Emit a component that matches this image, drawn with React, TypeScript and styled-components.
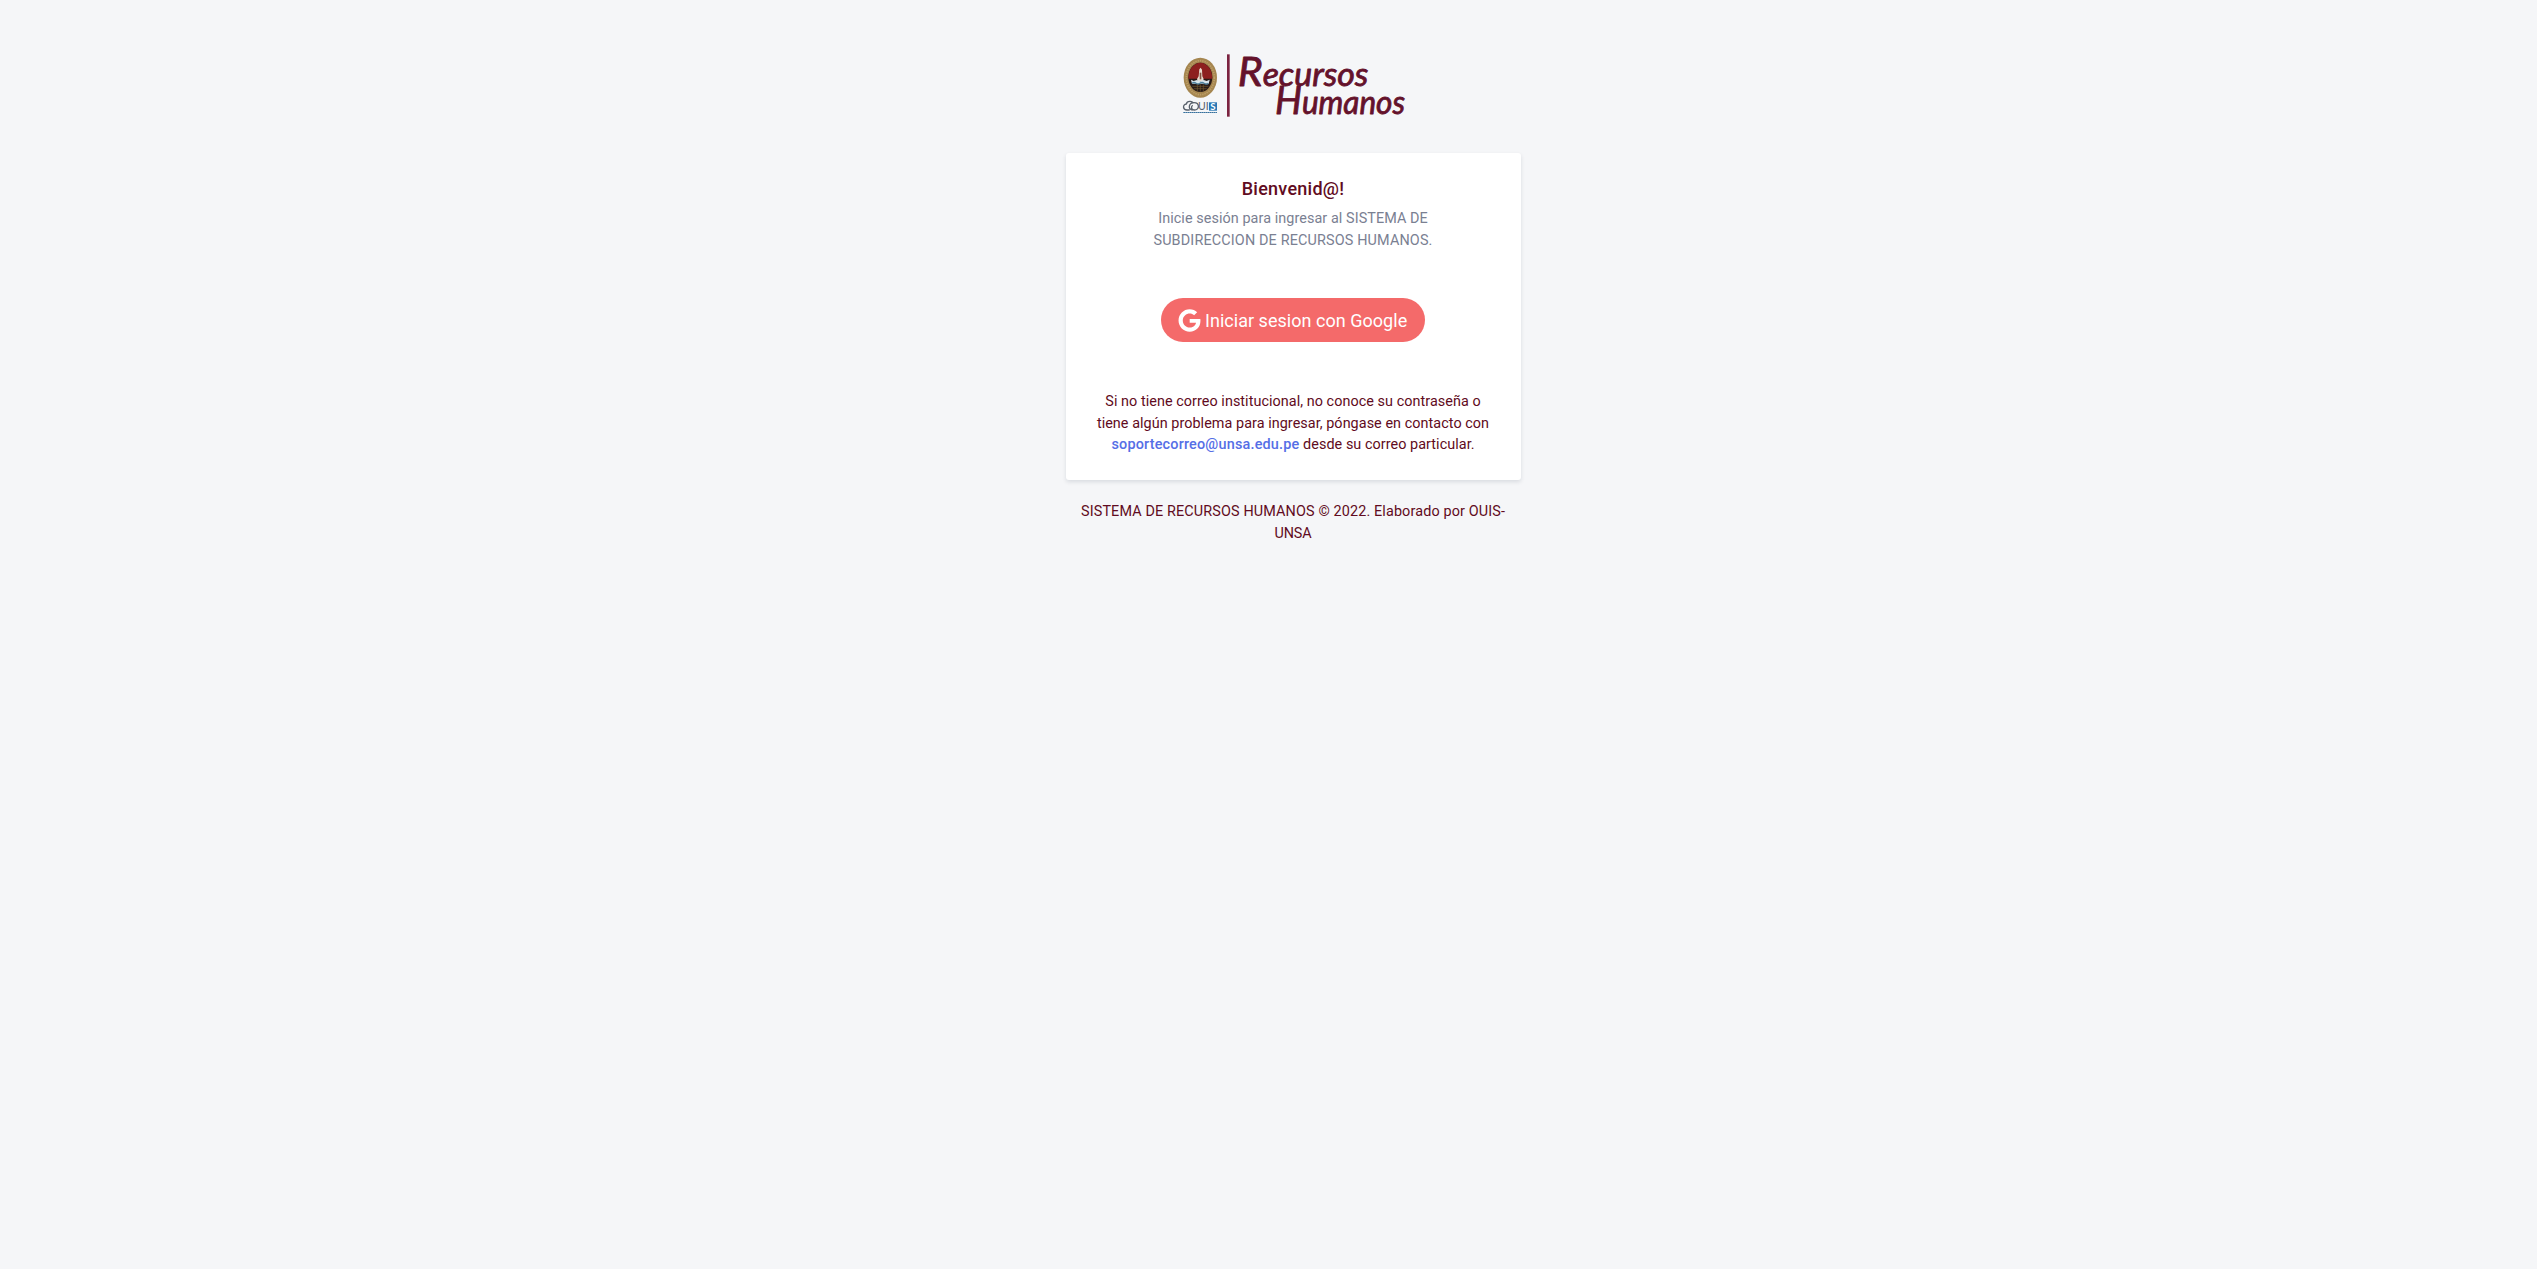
import React from "react";
import styled, { createGlobalStyle } from "styled-components";
import { FaGoogle } from "react-icons/fa";

const GlobalStyle = createGlobalStyle`
  *, *::before, *::after { box-sizing: border-box; }
  body {
    margin: 0;
    background: #f5f6f8;
    color: #610b21;
    font-family: Roboto, "Liberation Sans", sans-serif;
    font-size: 14.4px;
    line-height: 21.6px;
  }
`;

const Page = styled.main`
  display: flex;
  flex-direction: column;
  align-items: center;
  min-height: 100vh;
  padding: 50px 0 0 49px;
`;

const LogoLink = styled.div`
  display: flex;
  justify-content: center;
  height: 70px;
  margin-bottom: 33px;
`;

const LogoSvg = styled.svg`
  display: block;
  width: 223px;
  height: 70px;
  overflow: visible;
`;

const LogoWord = styled.text`
  font-family: Lato, "Open Sans", sans-serif;
  font-style: italic;
  font-weight: 400;
  font-size: 98px;
  fill: #64122b;
  stroke: #64122b;
  stroke-width: 2.5px;
  stroke-linejoin: round;
`;

const Card = styled.section`
  display: flex;
  flex-direction: column;
  align-items: center;
  width: 455px;
  height: 327px;
  padding: 22px 24px 24px;
  background: #fff;
  border-radius: 3px;
  box-shadow: 0 2px 4px rgba(15, 34, 58, 0.12);
  text-align: center;
`;

const Title = styled.h1`
  margin: 0 0 6px;
  font-size: 18px;
  line-height: 27px;
  font-weight: 500;
  letter-spacing: 0.26px;
`;

const Line = styled.span<{ $tracking: number }>`
  display: block;
  white-space: nowrap;
  letter-spacing: ${(p) => p.$tracking}px;
`;

const Intro = styled.p`
  margin: 0 0 47.3px;
  color: #7a8092;
`;

const GoogleButton = styled.button`
  display: flex;
  align-items: center;
  gap: 4px;
  width: 264px;
  height: 45px;
  padding: 0 17px;
  border: 0;
  border-radius: 23px;
  background: #f46a6a;
  color: #fff;
  font: 400 18px/27px Roboto, "Liberation Sans", sans-serif;
  letter-spacing: 0.03px;
  white-space: nowrap;
  cursor: pointer;

  svg {
    flex: none;
    width: 23px;
    height: 23px;
  }
`;

const Help = styled.p`
  margin: 49.500px 0 0;
`;

const MailLink = styled.a`
  color: #556ee6;
  font-weight: 500;
  letter-spacing: 0.2px;
  text-decoration: none;
`;

const Footer = styled.footer`
  margin-top: 21px;
  text-align: center;
`;

function Logo() {
  return (
    <LogoSvg viewBox="36 30 669 210" role="img" aria-label="Recursos Humanos">
      <ellipse cx="91" cy="113" rx="50" ry="60" fill="#a58650" />
      <ellipse cx="91" cy="113" rx="42" ry="51" fill="none" stroke="#bd9f68" strokeWidth="5" strokeDasharray="4 3" />
      <ellipse cx="91" cy="112" rx="36" ry="44" fill="#281a17" />
      <path d="M55 116a36 48 0 0 1 72 0z" fill="#8d201f" />
      <path d="M88 88l4-5 4 6 1 20 4 8-2 6H83l-2-6 5-8z" fill="#e9ddd0" />
      <path d="M89 98h5v20h-5z" fill="#81503e" />
      <path d="M63 119l8 4 10-3 10 4 10-4 9 3 9-4-3 12H66z" fill="#d7e5ed" />
      <path d="M66 130q6-5 12 0t12 0 12 0 13 0" fill="none" stroke="#4f819d" strokeWidth="4" />
      <path d="M67 139h48M72 146h38M82 133v21M91 133v22M100 133v21" fill="none" stroke="#70572d" strokeWidth="2" />
      <path
        d="M59 210h-8c-13 0-14-17-2-18 2-10 19-10 21-1M67 210c-14-3-11-22 5-22 17 0 18 22 1 22-9 0-11-9-5-14"
        fill="none"
        stroke="#59616c"
        strokeWidth="4"
      />
      <text x="84" y="211" fontFamily="Lato" fontSize="33" fill="#59616c" textLength="32" lengthAdjust="spacingAndGlyphs">UI</text>
      <rect x="117" y="187" width="24" height="25" fill="#2878b5" />
      <text x="121" y="210" fontFamily="Lato" fontSize="30" fontWeight="700" fill="#fff" textLength="16" lengthAdjust="spacingAndGlyphs">S</text>
      <path d="M40 217.500h101" stroke="#36719d" strokeWidth="3" strokeDasharray="5 1" />
      <rect x="171" y="43" width="8" height="187" fill="#7b2340" />
      <LogoWord x="203" y="138" textLength="392" lengthAdjust="spacingAndGlyphs">
        <tspan fontSize="124">R</tspan>ecursos
      </LogoWord>
      <LogoWord x="315" y="223" textLength="390" lengthAdjust="spacingAndGlyphs">
        <tspan fontSize="118">H</tspan>umanos
      </LogoWord>
    </LogoSvg>
  );
}

export default function App() {
  return (
    <Page>
      <GlobalStyle />
      <LogoLink>
        <Logo />
      </LogoLink>
      <Card>
        <Title>Bienvenid@!</Title>
        <Intro>
          <Line $tracking={0.07}>Inicie sesión para ingresar al SISTEMA DE</Line>
          <Line $tracking={0.15}>SUBDIRECCION DE RECURSOS HUMANOS.</Line>
        </Intro>
        <GoogleButton type="button">
          <FaGoogle />
          Iniciar sesion con Google
        </GoogleButton>
        <Help>
          <Line $tracking={0.05}>Si no tiene correo institucional, no conoce su contraseña o</Line>
          <Line $tracking={0.05}>tiene algún problema para ingresar, póngase en contacto con</Line>
          <Line $tracking={0.05}>
            <MailLink href="#">soportecorreo@unsa.edu.pe</MailLink> desde su correo particular.
          </Line>
        </Help>
      </Card>
      <Footer>
        <Line $tracking={0.13}>SISTEMA DE RECURSOS HUMANOS © 2022. Elaborado por OUIS-</Line>
        <Line $tracking={-0.1}>UNSA</Line>
      </Footer>
    </Page>
  );
}
